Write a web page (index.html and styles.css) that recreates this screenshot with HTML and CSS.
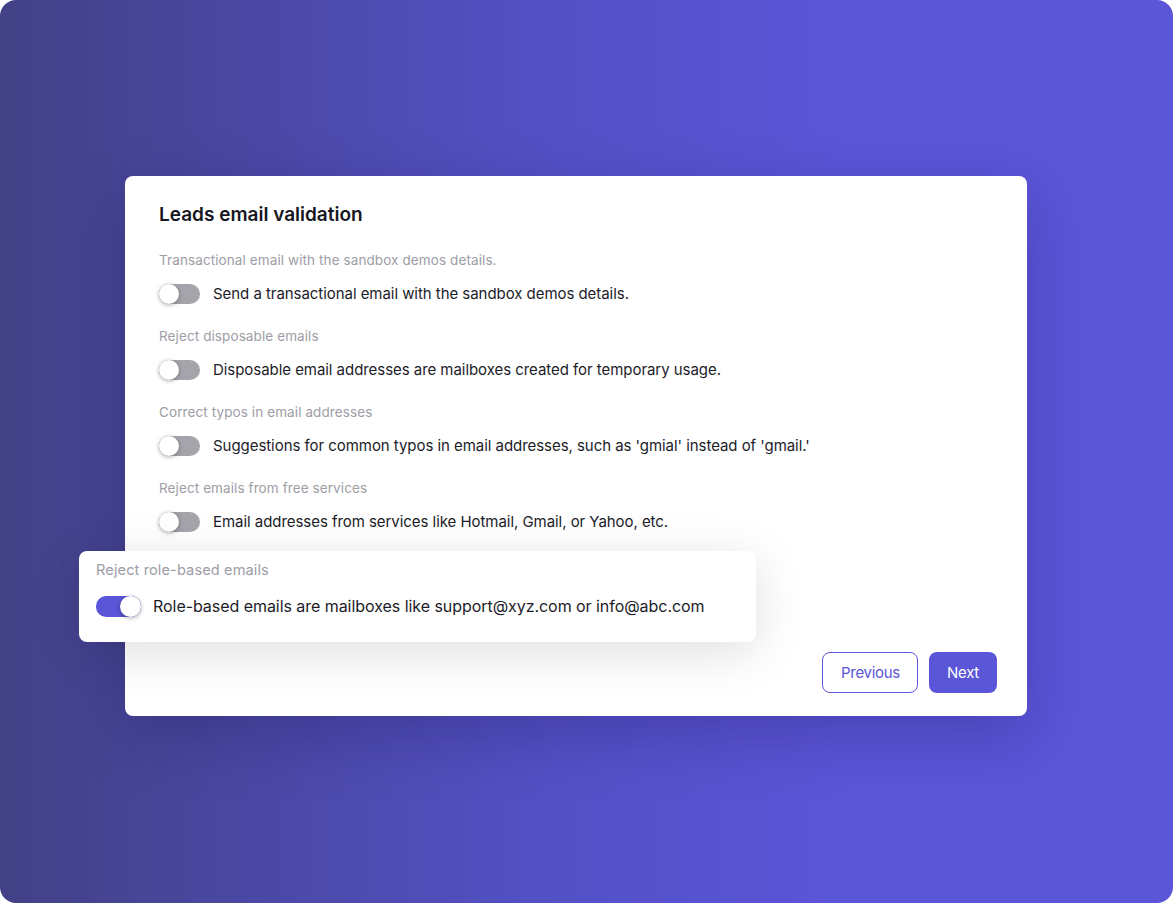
FILE: index.html
```html
<!DOCTYPE html>
<html lang="en">

<head>
    <meta charset="UTF-8">
    <meta name="viewport" content="width=device-width, initial-scale=1.0">
    <title>Leads email validation</title>
    <link rel="stylesheet" href="styles.css">
</head>

<body>
    <div class="frame">
        <section class="card">
            <h2>Leads email validation</h2>
            <div class="setting">
                <p class="setting-label">Transactional email with the sandbox demos details.</p>
                <div class="setting-row">
                    <span class="toggle"></span>
                    <span>Send a transactional email with the sandbox demos details.</span>
                </div>
            </div>
            <div class="setting">
                <p class="setting-label">Reject disposable emails</p>
                <div class="setting-row">
                    <span class="toggle"></span>
                    <span>Disposable email addresses are mailboxes created for temporary usage.</span>
                </div>
            </div>
            <div class="setting">
                <p class="setting-label">Correct typos in email addresses</p>
                <div class="setting-row">
                    <span class="toggle"></span>
                    <span>Suggestions for common typos in email addresses, such as 'gmial' instead of 'gmail.'</span>
                </div>
            </div>
            <div class="setting">
                <p class="setting-label">Reject emails from free services</p>
                <div class="setting-row">
                    <span class="toggle"></span>
                    <span>Email addresses from services like Hotmail, Gmail, or Yahoo, etc.</span>
                </div>
            </div>

            <!-- popped out row, drawn over the card -->
            <div class="setting highlight">
                <p class="setting-label">Reject role-based emails</p>
                <div class="setting-row">
                    <span class="toggle on"></span>
                    <span>Role-based emails are mailboxes like support@xyz.com or info@abc.com</span>
                </div>
            </div>

            <div class="actions">
                <button class="btn btn-outline" type="button">Previous</button>
                <button class="btn btn-primary" type="button">Next</button>
            </div>
        </section>
    </div>
</body>

</html>
```

FILE: styles.css
```css
body {
    font-family: Inter, "Liberation Sans", sans-serif;
    margin: 0;
    padding: 0;
    background-color: #fff;
    color: #1c1c28;
}
.frame {
    width: 1173px;
    height: 903px;
    box-sizing: border-box;
    padding: 176px 0 0 125px;
    border-radius: 16px;
    background: linear-gradient(90deg, #424186 0%, #5350c4 45%, #5b55d8 72%, #5b55d8 100%);
}
.card {
    position: relative;
    width: 902px;
    height: 540px;
    box-sizing: border-box;
    padding: 27px 30px 23px 34px;
    background: white;
    border-radius: 8px;
    box-shadow: 0 20px 60px rgba(20, 16, 80, 0.25);
    display: flex;
    flex-direction: column;
}
h2 {
    margin: 0 0 24px;
    font-size: 19px;
    line-height: 24px;
    font-weight: 600;
    color: #16161f;
}
.setting {
    margin-bottom: 22px;
}
.setting-label {
    margin: 0 0 14px;
    font-size: 13.5px;
    line-height: 18px;
    color: #9d9da6;
    letter-spacing: 0.1px;
}
.setting-row {
    display: flex;
    align-items: center;
    gap: 13px;
    font-size: 15px;
    line-height: 22px;
    letter-spacing: -0.05px;
}
.toggle {
    position: relative;
    flex: none;
    width: 41px;
    height: 20px;
    border-radius: 10px;
    background-color: #a4a4aa;
}
.toggle::after {
    content: "";
    position: absolute;
    top: 0;
    left: 0;
    width: 20px;
    height: 20px;
    border-radius: 50%;
    background: white;
    box-shadow: 0 1px 4px rgba(0, 0, 0, 0.35);
}
.toggle.on {
    background-color: #5b55d8;
}
.toggle.on::after {
    left: 21px;
}
.highlight {
    position: absolute;
    left: -46px;
    top: 375px;
    width: 677px;
    height: 91px;
    box-sizing: border-box;
    padding: 10px 17px;
    margin: 0;
    background: white;
    border-radius: 8px;
    box-shadow: 0 10px 50px rgba(0, 0, 0, 0.13);
}
.highlight .setting-label {
    font-size: 14.6px;
    line-height: 19px;
    margin-bottom: 14px;
}
.highlight .setting-row {
    font-size: 16px;
    line-height: 24px;
    gap: 12px;
}
.highlight .toggle {
    width: 45px;
    height: 21px;
}
.highlight .toggle::after {
    width: 21px;
    height: 21px;
}
.highlight .toggle.on::after {
    left: 24px;
}
.actions {
    margin-top: auto;
    display: flex;
    justify-content: flex-end;
    gap: 11px;
}
.btn {
    height: 41px;
    padding: 0 18px;
    border-radius: 8px;
    font-family: inherit;
    font-size: 15px;
    letter-spacing: -0.3px;
    cursor: pointer;
}
.btn-outline {
    width: 96px;
    background: white;
    color: #5b55d8;
    border: 1px solid #5b55d8;
}
.btn-primary {
    width: 68px;
    background-color: #5b55d8;
    color: white;
    border: none;
}
```
